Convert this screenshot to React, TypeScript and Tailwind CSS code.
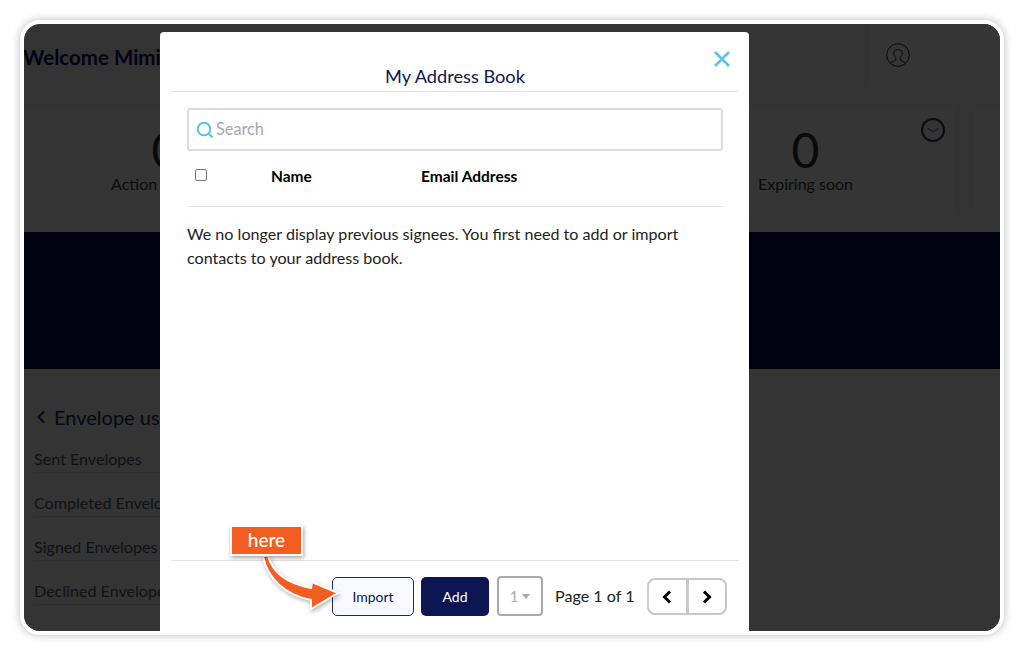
import React from "react";
import { ChevronLeft } from "lucide-react";

const font = { fontFamily: '"Lato", "Noto Sans", sans-serif' };

function Row({ label }: { label: string }) {
  return (
    <div className="h-[44px] flex items-end pb-[3px] leading-[20px] border-b border-[#2f2f2f] text-[16.1px] text-[#121214] whitespace-nowrap">
      {label}
    </div>
  );
}

function Card({ label, clock }: { label?: string; clock?: boolean }) {
  return (
    <div className="relative w-[300px] h-[108px] shrink-0 bg-[#353535] flex flex-col items-center pt-[15px] pl-[1px]">
      {label && <div className="text-[48px] leading-[56px] text-[#0a0a0a]">0</div>}
      {label && <div className="text-[16px] leading-[20px] mt-[-4px] text-[#0c0c0c] whitespace-nowrap">{label}</div>}
      {clock && (
        <svg viewBox="0 0 24 24" className="absolute right-[10px] top-[11px] w-[24px] h-[24px]" fill="none">
          <circle cx="12" cy="12" r="11" stroke="#0b0b12" strokeWidth="2" />
          <path d="M6.5 10.5 L12 13.5 L17.5 10.5" stroke="#14233a" strokeWidth="1.6" />
        </svg>
      )}
    </div>
  );
}

export default function App() {
  return (
    <div className="relative w-[1024px] h-[654px] bg-white overflow-hidden" style={font}>
      <div className="absolute left-[20px] top-[20px] w-[984px] h-[615px] rounded-[20px] border-4 border-white shadow-[0_0_8px_rgba(0,0,0,0.28)] bg-[#333334] overflow-hidden">
        {/* dashboard behind the overlay */}
        <div className="flex flex-col h-full">
          <div className="h-[63px] flex justify-between">
            <div className="text-[20.5px] font-bold text-[#030412] pt-[19px] leading-[28px] whitespace-nowrap ml-[-1px]">Welcome Mimi</div>
            <div className="w-[131px] bg-[#353535] flex items-center pl-[17px]">
              <svg viewBox="0 0 24 24" className="w-[24px] h-[24px] mt-[-1px]" fill="none" stroke="#0b0b0b" strokeWidth="1">
                <circle cx="12" cy="12" r="11.3" />
                <path d="M5 19.5 L9 17.5 C10 17 10 15.5 9.5 14.5 C8 12.5 7.5 10.5 8 8.5 C8.8 6 15.2 6 16 8.5 C16.5 10.5 16 12.5 14.5 14.5 C14 15.5 14 17 15 17.5 L19 19.5" />
              </svg>
            </div>
          </div>
          <div className="flex gap-[20px] mt-[20px] ml-[-9px]">
            <Card label="Action required" />
            <Card />
            <Card label="Expiring soon" clock />
            <Card />
          </div>
          <div className="h-[137px] mt-[17px] bg-[#01020f]" />
          <div className="flex-1 bg-[#343434] pl-[10px] pt-[34px]">
            <div className="flex items-center text-[20px] leading-[28px] text-[#060818] whitespace-nowrap">
              <ChevronLeft size={20} strokeWidth={2.4} className="text-[#060818] mr-[3px] ml-[-3px]" />
              Envelope usage
            </div>
            <div className="w-[240px] mt-[-2px]">
              <Row label="Sent Envelopes" />
              <Row label="Completed Envelopes" />
              <Row label="Signed Envelopes" />
              <Row label="Declined Envelopes" />
            </div>
          </div>
        </div>

        {/* modal */}
        <div className="absolute left-[136px] top-[8px] bottom-0 w-[589px] bg-white rounded-t-[4px] pl-[11px] pr-[10px] flex flex-col text-[#222]">
          <div className="relative h-[60px] border-b border-[#e3e3e3] text-center text-[18.2px] leading-[26px] pt-[31px] text-[#0b1652] shrink-0">
            My Address Book
            <svg viewBox="0 0 18 18" className="absolute right-[8px] top-[18px] w-[18px] h-[18px]" fill="none" stroke="#5cc3e4" strokeWidth="2.6">
              <path d="M2 2 L16 16 M16 2 L2 16" />
            </svg>
          </div>
          <div className="flex-1 px-[16px] pt-[16px] flex flex-col min-h-0">
            <div className="h-[43px] border-2 border-[#dcdcdc] rounded-[3px] flex items-center pl-[7px] gap-[2px] text-[16.3px] text-[#a3a8b6]">
              <svg viewBox="0 0 18 18" className="w-[18px] h-[18px]" fill="none" stroke="#5cc3e4" strokeWidth="2">
                <circle cx="8" cy="8" r="6.3" />
                <path d="M12.5 12.5 L16.5 16.5" />
              </svg>
              Search
            </div>
            <div className="h-[56px] border-b border-[#e3e3e3] flex text-[15.5px] font-bold text-black pt-[14px] leading-[22px]">
              <div className="w-[84px] pl-[8px] pt-[4px]">
                <div className="w-[12px] h-[12px] border border-[#777] rounded-[2px] bg-white" />
              </div>
              <div className="w-[150px]">Name</div>
              <div>Email Address</div>
            </div>
            <p className="mt-[15px] text-[16.1px] leading-[24px] text-[#222]">
              We no longer display previous signees. You first need to add or import contacts to your address book.
            </p>
          </div>
          <div className="h-[71px] border-t border-[#e3e3e3] shrink-0 flex items-start pt-[16px] pl-[161px]">
            <div className="w-[82px] h-[39px] pb-[1px] bg-[#f7f9fe] border border-[#1c2a63] rounded-[5px] flex items-center justify-center text-[14px] text-[#0b1652]">Import</div>
            <div className="w-[68px] h-[39px] ml-[7px] pb-[1px] bg-[#0b1652] rounded-[5px] flex items-center justify-center text-[14px] text-white">Add</div>
            <div className="w-[46px] h-[40px] ml-[8px] mt-[-1px] border-2 border-[#aaaaaa] rounded-[4px] flex items-center justify-center gap-[4px] text-[15px] text-[#aaaaaa]">
              1
              <svg viewBox="0 0 8 5" className="w-[8px] h-[5px]"><path d="M0 0 H8 L4 5 Z" fill="#aaaaaa" /></svg>
            </div>
            <div className="ml-[12px] w-[92px] text-[16.1px] leading-[38px] text-[#222] whitespace-nowrap">Page 1 of 1</div>
            <div className="w-[80px] h-[37px] mt-[1px] border-2 border-[#c8c8c8] rounded-[8px] flex">
              <div className="flex-1 flex items-center justify-center border-r-[3px] border-[#c8c8c8]">
                <svg viewBox="0 0 10 14" className="w-[10px] h-[14px]" fill="none" stroke="#000" strokeWidth="3"><path d="M8 1.5 L2.5 7 L8 12.5" /></svg>
              </div>
              <div className="flex-1 flex items-center justify-center">
                <svg viewBox="0 0 10 14" className="w-[10px] h-[14px]" fill="none" stroke="#000" strokeWidth="3"><path d="M2 1.5 L7.5 7 L2 12.5" /></svg>
              </div>
            </div>
          </div>
        </div>
      </div>

      {/* annotation */}
      <svg viewBox="0 0 90 70" className="absolute left-[255px] top-[548px] w-[90px] h-[70px]" style={{ filter: "drop-shadow(1px 2px 2px rgba(0,0,0,0.3))" }}>
        <path d="M8 8 C12 30 30 47 56 52 L56 61 L83 45 L57 34 L56 40 C35 36 18 26 13 8 Z" fill="#f45d22" stroke="#fff" strokeWidth="2" />
      </svg>
      <div className="absolute left-[230px] top-[525px] w-[73px] h-[31px] bg-[#f45d22] border-2 border-white shadow-[1px_2px_4px_rgba(0,0,0,0.35)] flex items-center justify-center text-[19px] font-medium text-white">here</div>
    </div>
  );
}
